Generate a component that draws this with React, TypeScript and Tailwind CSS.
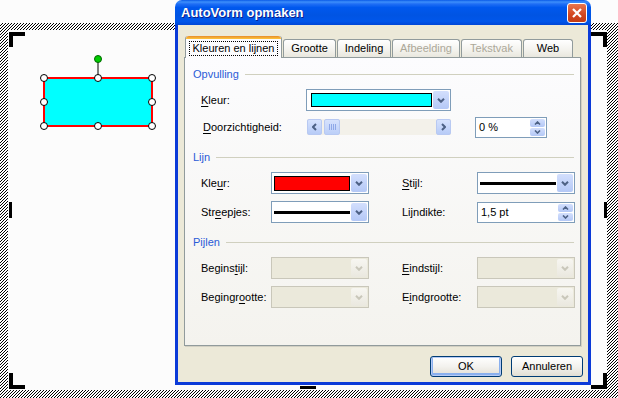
import React from 'react';

const ArrowDown = ({ color = '#4d6185' }: { color?: string }) => (
  <svg width="8" height="5" viewBox="0 0 8 5">
    <polyline points="1,0.8 4,3.8 7,0.8" fill="none" stroke={color} strokeWidth="2" />
  </svg>
);

const ArrowSide = ({ left }: { left?: boolean }) => (
  <svg width="5" height="8" viewBox="0 0 5 8">
    <polyline points={left ? '4,1 1,4 4,7' : '1,1 4,4 1,7'} fill="none" stroke="#4d6185" strokeWidth="2" />
  </svg>
);

const SmallArrow = ({ up }: { up?: boolean }) => (
  <svg width="7" height="4" viewBox="0 0 7 4">
    <polyline points={up ? '1,3.5 3.5,1 6,3.5' : '1,0.5 3.5,3 6,0.5'} fill="none" stroke="#4d6185" strokeWidth="1.6" />
  </svg>
);

// XP style combo box with a drop button on the right
const Combo = ({ className, children, disabled }: { className: string; children?: React.ReactNode; disabled?: boolean }) => (
  <div
    className={`flex h-[22px] items-stretch border ${
      disabled ? 'border-[#c9c7ba] bg-[#ebe9db]' : 'border-[#7f9db9] bg-white'
    } ${className}`}
  >
    <div className="flex flex-1 items-center overflow-hidden">{children}</div>
    <div
      className={`m-[1px] flex w-[16px] items-center justify-center rounded-[2px] ${
        disabled
          ? 'bg-[linear-gradient(180deg,#f7f6f1,#eae8df)]'
          : 'bg-[linear-gradient(180deg,#d3dffd,#b4c8f6)]'
      }`}
    >
      <ArrowDown color={disabled ? '#c9c7ba' : '#4d6185'} />
    </div>
  </div>
);

const Spin = ({ className, value }: { className: string; value: string }) => (
  <div className={`flex h-[21px] items-stretch border border-[#7f9db9] bg-white ${className}`}>
    <div className="flex flex-1 items-center pl-[3px] text-[11px] text-black">{value}</div>
    <div className="m-[1px] flex w-[15px] flex-col gap-[1px]">
      <div className="flex flex-1 items-center justify-center rounded-[2px] bg-[linear-gradient(180deg,#d3dffd,#b4c8f6)]">
        <SmallArrow up />
      </div>
      <div className="flex flex-1 items-center justify-center rounded-[2px] bg-[linear-gradient(180deg,#d3dffd,#b4c8f6)]">
        <SmallArrow />
      </div>
    </div>
  </div>
);

const GroupHeader = ({ title, className }: { title: string; className: string }) => (
  <div className={`flex h-[14px] items-center pl-[8px] pr-[6px] ${className}`}>
    <span className="text-[11px] text-[#2a5bd7]">{title}</span>
    <div className="ml-[6px] h-px flex-1 bg-[#d0d0bf]" />
  </div>
);

const Label = ({ pre, key_, post, className }: { pre: string; key_: string; post: string; className: string }) => (
  <span className={`text-[11px] text-black ${className}`}>
    {pre}
    <span className="underline underline-offset-2">{key_}</span>
    {post}
  </span>
);

const Handle = ({ x, y }: { x: number; y: number }) => (
  <circle cx={x} cy={y} r="3.5" fill="#fff" stroke="#000" strokeWidth="1" />
);

const CropMark = ({ className }: { className: string }) => <div className={`absolute bg-black ${className}`} />;

const tabs = [
  { label: 'Grootte', w: 'w-[53px]', dim: false },
  { label: 'Indeling', w: 'w-[54px]', dim: false },
  { label: 'Afbeelding', w: 'w-[68px]', dim: true },
  { label: 'Tekstvak', w: 'w-[61px]', dim: true },
  { label: 'Web', w: 'w-[50px]', dim: false },
];

export default function App() {
  return (
    <div className="relative flex h-[398px] w-[618px] flex-col overflow-hidden bg-[#fcfcfc] font-['Liberation_Sans',Arial,sans-serif]">
      {/* page frame with hatched border */}
      <div className="mt-[23px] flex flex-1 flex-col">
        <div className="relative flex flex-1 flex-col pb-[8px] pl-[8px] pr-[11px] pt-[7px]">
          <svg className="absolute inset-0 h-full w-full" shapeRendering="crispEdges">
            <defs>
              <pattern id="hatch" width="3" height="3" patternUnits="userSpaceOnUse">
                <rect x="2" y="0" width="1" height="1" fill="#000" />
                <rect x="1" y="1" width="1" height="1" fill="#000" />
                <rect x="0" y="2" width="1" height="1" fill="#000" />
              </pattern>
            </defs>
            <rect width="100%" height="100%" fill="#fff" />
            <rect width="100%" height="100%" fill="url(#hatch)" />
          </svg>
          <div className="relative flex-1 bg-[#fcfcfc]" />
        </div>
      </div>

      {/* crop marks */}
      <CropMark className="left-[9px] top-[32px] h-[4px] w-[16px]" />
      <CropMark className="left-[9px] top-[32px] h-[15px] w-[4px]" />
      <CropMark className="left-[9px] top-[202px] h-[16px] w-[3px]" />
      <CropMark className="left-[9px] top-[373px] h-[16px] w-[4px]" />
      <CropMark className="left-[9px] top-[385px] h-[4px] w-[16px]" />
      <CropMark className="left-[300px] top-[386px] h-[3px] w-[16px]" />
      <CropMark className="left-[591px] top-[32px] h-[4px] w-[16px]" />
      <CropMark className="left-[603px] top-[32px] h-[15px] w-[4px]" />
      <CropMark className="left-[604px] top-[202px] h-[16px] w-[3px]" />
      <CropMark className="left-[603px] top-[373px] h-[16px] w-[4px]" />
      <CropMark className="left-[591px] top-[385px] h-[4px] w-[16px]" />

      {/* selected shape */}
      <svg className="absolute left-0 top-0" width="170" height="140">
        <line x1="98" y1="60" x2="98" y2="78" stroke="#000" strokeWidth="1" />
        <rect x="44" y="78" width="108" height="48" fill="#00ffff" stroke="#ff0000" strokeWidth="2" />
        <circle cx="98" cy="59" r="3.5" fill="#00cc00" stroke="#006600" strokeWidth="1" />
        <Handle x={44} y={78} />
        <Handle x={98} y={78} />
        <Handle x={152} y={78} />
        <Handle x={44} y={102} />
        <Handle x={152} y={102} />
        <Handle x={44} y={126} />
        <Handle x={98} y={126} />
        <Handle x={152} y={126} />
      </svg>

      {/* dialog window */}
      <div className="absolute left-[175px] top-0 flex h-[385px] w-[416px] flex-col">
        <div className="flex h-[25px] items-center rounded-t-[7px] bg-[linear-gradient(180deg,#0a5ae8_0%,#3d8ffb_8%,#1f6ef5_16%,#0058ee_30%,#0054e3_60%,#0056ea_85%,#0046d6_100%)] pl-[6px] pr-[4px]">
          <span className="flex-1 text-[13px] font-bold text-white [text-shadow:1px_1px_0_#0a1e8c]">
            AutoVorm opmaken
          </span>
          <div className="flex h-[20px] w-[20px] items-center justify-center rounded-[3px] border border-white bg-[linear-gradient(180deg,#e8764f,#d2461f_60%,#c23c16)]">
            <svg width="10" height="10" viewBox="0 0 10 10">
              <path d="M1 1 L9 9 M9 1 L1 9" stroke="#fff" strokeWidth="2.2" />
            </svg>
          </div>
        </div>

        <div className="flex flex-1 flex-col border-x-[3px] border-b-[3px] border-[#0b3ad8] bg-[#ece9d8] pl-[6px] pr-[7px] pt-[10px]">
          {/* tabs */}
          <div className="relative z-10 flex h-[22px] items-end">
            <div className="ml-[1px] mb-[-1px] flex h-[22px] w-[97px] flex-col rounded-t-[3px] border-x border-[#919b9c] bg-[#fcfcfe]">
              <div className="h-[3px] rounded-t-[3px] bg-[linear-gradient(180deg,#e68b2c,#ffc73c)]" />
              <div className="flex flex-1 items-center justify-center">
                <span className="border border-dotted border-black px-[3px] text-[11px] leading-[13px] text-black">
                  Kleuren en lijnen
                </span>
              </div>
            </div>
            {tabs.map((t) => (
              <div
                key={t.label}
                className={`ml-[1px] flex h-[18px] items-center justify-center rounded-t-[3px] border-x border-t border-[#919b9c] bg-[linear-gradient(180deg,#ffffff,#f3f2ed_60%,#e9e7de)] text-[11px] ${t.w} ${
                  t.dim ? 'text-[#aca899]' : 'text-black'
                }`}
              >
                {t.label}
              </div>
            ))}
          </div>

          {/* tab page */}
          <div className="flex h-[289px] flex-col border border-[#919b9c] bg-[linear-gradient(180deg,#fcfcfe,#f4f3ee)] shadow-[1px_1px_0_#d2d0c3]">
            <GroupHeader title="Opvulling" className="mt-[9px]" />
            <div className="mt-[8px] flex h-[22px] items-center">
              <Label pre="" key_="K" post="leur:" className="ml-[16px] w-[105px]" />
              <Combo className="w-[145px]">
                <div className="ml-[4px] h-[14px] w-[121px] border border-black bg-[#00ffff]" />
              </Combo>
            </div>
            <div className="mt-[6px] flex h-[20px] items-center">
              <Label pre="" key_="D" post="oorzichtigheid:" className="ml-[18px] w-[104px]" />
              <div className="flex h-[16px] w-[144px] bg-[#f3f1ea]">
                <div className="flex w-[15px] items-center justify-center rounded-[2px] border border-[#b8c9f2] bg-[linear-gradient(180deg,#d6e2fd,#b7cbf7)]">
                  <ArrowSide left />
                </div>
                <div className="ml-[2px] flex w-[16px] items-center justify-center rounded-[2px] border border-[#b8c9f2] bg-[linear-gradient(180deg,#d6e2fd,#bccff8)]">
                  <svg width="7" height="6" viewBox="0 0 7 6">
                    <path d="M0.5 0 V6 M2.5 0 V6 M4.5 0 V6 M6.5 0 V6" stroke="#8fa8e8" strokeWidth="1" />
                  </svg>
                </div>
                <div className="flex-1" />
                <div className="flex w-[15px] items-center justify-center rounded-[2px] border border-[#b8c9f2] bg-[linear-gradient(180deg,#d6e2fd,#b7cbf7)]">
                  <ArrowSide />
                </div>
              </div>
              <Spin className="ml-[24px] w-[72px]" value="0 %" />
            </div>

            <GroupHeader title="Lijn" className="mt-[13px]" />
            <div className="mt-[8px] flex h-[22px] items-center">
              <Label pre="Kle" key_="u" post="r:" className="ml-[16px] w-[70px]" />
              <Combo className="w-[98px]">
                <div className="ml-[2px] h-[15px] w-[77px] border border-black bg-[#ff0000]" />
              </Combo>
              <Label pre="" key_="S" post="tijl:" className="ml-[33px] w-[75px]" />
              <Combo className="w-[98px]">
                <div className="ml-[2px] h-[3px] w-[78px] bg-black" />
              </Combo>
            </div>
            <div className="mt-[7px] flex h-[22px] items-center">
              <Label pre="Str" key_="e" post="epjes:" className="ml-[16px] w-[70px]" />
              <Combo className="w-[98px]">
                <div className="ml-[2px] h-[3px] w-[78px] bg-black" />
              </Combo>
              <Label pre="Li" key_="j" post="ndikte:" className="ml-[33px] w-[75px]" />
              <Spin className="w-[98px]" value="1,5 pt" />
            </div>

            <GroupHeader title="Pijlen" className="mt-[12px]" />
            <div className="mt-[8px] flex h-[22px] items-center">
              <Label pre="Begins" key_="t" post="ijl:" className="ml-[16px] w-[70px]" />
              <Combo className="w-[98px]" disabled />
              <Label pre="" key_="E" post="indstijl:" className="ml-[33px] w-[75px]" />
              <Combo className="w-[98px]" disabled />
            </div>
            <div className="mt-[7px] flex h-[22px] items-center">
              <Label pre="Begingr" key_="o" post="otte:" className="ml-[16px] w-[70px]" />
              <Combo className="w-[98px]" disabled />
              <Label pre="E" key_="i" post="ndgrootte:" className="ml-[33px] w-[75px]" />
              <Combo className="w-[98px]" disabled />
            </div>
          </div>

          {/* buttons */}
          <div className="mt-[10px] flex justify-end gap-[9px] pr-[-2px]">
            <button className="h-[21px] w-[72px] rounded-[3px] border border-[#003c74] bg-[linear-gradient(180deg,#ffffff,#f3f2ee_50%,#e2ded3)] text-[11px] text-black shadow-[inset_0_0_0_1px_#b6cbf5,inset_0_-1px_0_2px_#8ab0ee]">
              OK
            </button>
            <button className="mr-[-2px] h-[21px] w-[72px] rounded-[3px] border border-[#003c74] bg-[linear-gradient(180deg,#ffffff,#f3f2ee_50%,#e2ded3)] text-[11px] text-black">
              Annuleren
            </button>
          </div>
        </div>
      </div>
    </div>
  );
}
